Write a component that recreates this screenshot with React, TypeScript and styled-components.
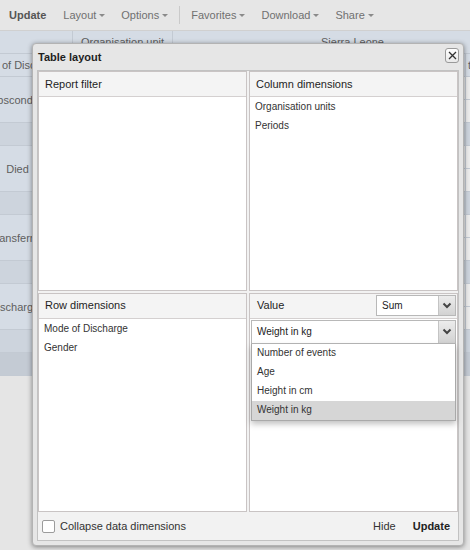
import React from 'react';
import styled, { createGlobalStyle } from 'styled-components';

const GlobalStyle = createGlobalStyle`
  * { box-sizing: border-box; }
  html, body {
    margin: 0;
    padding: 0;
    background: #e5e5e5;
    font-family: 'Liberation Sans', Arial, sans-serif;
  }
`;

const Page = styled.div`
  position: relative;
  width: 470px;
  height: 550px;
  overflow: hidden;
  background: #e5e5e5;
`;

/* ---------- toolbar ---------- */

const Toolbar = styled.div`
  display: flex;
  align-items: center;
  height: 31px;
  padding-left: 1px;
  background: #e6e6e6;
  border-bottom: 1px solid #d0d0d0;
`;

const ToolButton = styled.div<{ $bold?: boolean }>`
  display: flex;
  align-items: center;
  height: 100%;
  padding: 0 8px;
  margin-right: ${(p) => (p.$bold ? '1px' : '0')};
  font-size: 11px;
  font-weight: ${(p) => (p.$bold ? 'bold' : 'normal')};
  color: ${(p) => (p.$bold ? '#555' : '#707070')};
`;

const Caret = styled.span`
  width: 0;
  height: 0;
  margin-left: 3px;
  border-left: 3px solid transparent;
  border-right: 3px solid transparent;
  border-top: 3px solid #8a8a8a;
`;

const ToolSeparator = styled.div`
  width: 1px;
  height: 18px;
  margin: 0 3px;
  background: #cacaca;
`;

/* ---------- background pivot table ---------- */

const DataTable = styled.div`
  display: grid;
  grid-template-columns: 110px 100px 293px 67px;
  grid-auto-rows: 23px;
  margin-left: -37px;
  width: 570px;
`;

type Tone = 'head' | 'sub' | 'total' | 'data';

const toneColor: Record<Tone, string> = {
  head: '#d5dce5',
  sub: '#cdd4dd',
  total: '#c4cbd4',
  data: '#ececec',
};

const Cell = styled.div<{ $tone: Tone; $col?: string; $row?: string }>`
  display: flex;
  align-items: center;
  justify-content: center;
  grid-column: ${(p) => p.$col || 'auto'};
  grid-row: ${(p) => p.$row || 'auto'};
  background: ${(p) => toneColor[p.$tone]};
  border-right: 1px solid #c3cad3;
  border-bottom: 1px solid #c3cad3;
  font-size: 11px;
  color: #5e5e5e;
  white-space: nowrap;
  overflow: hidden;
`;

const EdgeCell = styled(Cell)`
  justify-content: flex-start;
  padding-left: 2px;
`;

const groups = ['Absconded', 'Died', 'Transferred', 'Discharged'];

const PivotTable: React.FC = () => {
  const rows: React.ReactNode[] = [];
  groups.forEach((g, i) => {
    const start = 3 + i * 3;
    rows.push(
      <Cell key={g} $tone="head" $col="1" $row={`${start} / span 2`}>
        {g}
      </Cell>,
      <Cell key={g + 'f'} $tone="head" $col="2" $row={`${start}`}>Female</Cell>,
      <Cell key={g + 'fa'} $tone="data" $col="3" $row={`${start}`} />,
      <Cell key={g + 'fb'} $tone="data" $col="4" $row={`${start}`} />,
      <Cell key={g + 'm'} $tone="head" $col="2" $row={`${start + 1}`}>Male</Cell>,
      <Cell key={g + 'ma'} $tone="data" $col="3" $row={`${start + 1}`} />,
      <Cell key={g + 'mb'} $tone="data" $col="4" $row={`${start + 1}`} />,
      <Cell key={g + 's'} $tone="sub" $col="1 / span 2" $row={`${start + 2}`} />,
      <Cell key={g + 'sa'} $tone="sub" $col="3" $row={`${start + 2}`} />,
      <Cell key={g + 'sb'} $tone="sub" $col="4" $row={`${start + 2}`} />
    );
  });

  return (
    <DataTable>
      <Cell $tone="head" $col="1" $row="1" />
      <Cell $tone="head" $col="2" $row="1">Organisation unit</Cell>
      <Cell $tone="head" $col="3 / span 2" $row="1">Sierra Leone</Cell>
      <Cell $tone="head" $col="1" $row="2">Mode of Discharge</Cell>
      <Cell $tone="head" $col="2" $row="2">Gender</Cell>
      <Cell $tone="head" $col="3" $row="2">Weight in kg</Cell>
      <EdgeCell $tone="head" $col="4" $row="2">te</EdgeCell>
      {rows}
      <Cell $tone="total" $col="1 / span 2" $row="15" />
      <Cell $tone="total" $col="3" $row="15" />
      <Cell $tone="total" $col="4" $row="15" />
    </DataTable>
  );
};

/* ---------- dialog ---------- */

const Dialog = styled.div`
  position: absolute;
  left: 32px;
  top: 43px;
  width: 432px;
  height: 503px;
  display: flex;
  flex-direction: column;
  padding: 0 4px 4px 4px;
  background: #e6e6e6;
  border: 1px solid #b3b3b3;
  border-radius: 4px;
  box-shadow: 0 1px 5px rgba(0, 0, 0, 0.45);
`;

const TitleBar = styled.div`
  display: flex;
  align-items: center;
  justify-content: space-between;
  height: 26px;
  padding-left: 1px;
`;

const Title = styled.div`
  font-size: 11px;
  font-weight: bold;
  color: #1e1e1e;
`;

const CloseButton = styled.div`
  display: flex;
  align-items: center;
  justify-content: center;
  width: 14px;
  height: 15px;
  margin-top: -3px;
  border: 1px solid #9a9a9a;
  border-radius: 3px;
  background: linear-gradient(#ffffff, #e9e9e9);
`;

const Body = styled.div`
  flex: 1;
  display: flex;
  flex-direction: column;
  background: #f2f2f2;
  border: 1px solid #c2c2c2;
`;

const PanelGrid = styled.div`
  flex: 1;
  display: grid;
  grid-template-columns: 1fr 1fr;
  grid-template-rows: 1fr 1fr;
  gap: 2px;
`;

const Panel = styled.div`
  display: flex;
  flex-direction: column;
  min-height: 0;
  background: #ffffff;
  border: 1px solid #c9c4c4;
`;

const PanelHeader = styled.div<{ $split?: boolean }>`
  display: flex;
  align-items: center;
  justify-content: ${(p) => (p.$split ? 'space-between' : 'flex-start')};
  height: 25px;
  flex-shrink: 0;
  padding: ${(p) => (p.$split ? '0 1px 1px 7px' : '0 6px 1px 6px')};
  background: #f4f4f4;
  border-bottom: 1px solid #d4d0d0;
  font-size: 11px;
  color: #1e1e1e;
`;

const ItemList = styled.div<{ $indent?: number }>`
  display: flex;
  flex-direction: column;
  padding-left: ${(p) => p.$indent ?? 5}px;
`;

const Item = styled.div`
  height: 19px;
  line-height: 19px;
  font-size: 10px;
  color: #333;
`;

const Select = styled.div<{ $width?: number; $height: number }>`
  display: flex;
  width: ${(p) => (p.$width ? `${p.$width}px` : 'auto')};
  height: ${(p) => p.$height}px;
  background: #ffffff;
  border: 1px solid #b8b8b8;
`;

const SelectText = styled.div`
  flex: 1;
  display: flex;
  align-items: center;
  padding-left: 5px;
  font-size: 10px;
  color: #222;
`;

const Trigger = styled.div`
  display: flex;
  align-items: center;
  justify-content: center;
  width: 17px;
  background: linear-gradient(#ececec, #d2d2d2);
  border-left: 1px solid #c4c4c4;
`;

const ComboWrap = styled.div`
  position: relative;
  margin: 1px 1px 0 1px;
`;

const DropList = styled.div`
  position: absolute;
  left: 0;
  right: 0;
  top: 100%;
  background: #ffffff;
  border: 1px solid #a9a9a9;
  border-top: none;
  box-shadow: 0 3px 6px rgba(0, 0, 0, 0.25);
  z-index: 2;
`;

const DropItem = styled.div<{ $selected?: boolean }>`
  height: 19px;
  line-height: 18px;
  padding-left: 5px;
  font-size: 10px;
  color: #333;
  background: ${(p) => (p.$selected ? '#d6d6d6' : 'transparent')};
`;

const Footer = styled.div`
  display: flex;
  align-items: center;
  height: 28px;
  flex-shrink: 0;
  padding: 0 8px 0 4px;
  font-size: 11px;
  color: #333;
`;

const CheckBox = styled.div`
  width: 13px;
  height: 13px;
  background: #ffffff;
  border: 1px solid #9c9c9c;
  border-radius: 2px;
`;

const CheckLabel = styled.span`
  margin-left: 5px;
  flex: 1;
`;

const FooterButton = styled.span<{ $bold?: boolean }>`
  margin-left: ${(p) => (p.$bold ? '17px' : '0')};
  font-weight: ${(p) => (p.$bold ? 'bold' : 'normal')};
  color: ${(p) => (p.$bold ? '#222' : '#333')};
`;

const Chevron: React.FC = () => (
  <svg width="10" height="7" viewBox="0 0 10 7">
    <polyline points="1.5,1.5 5,5 8.5,1.5" fill="none" stroke="#444" strokeWidth="2" />
  </svg>
);

const CloseIcon: React.FC = () => (
  <svg width="9" height="9" viewBox="0 0 9 9">
    <path d="M1 1 L8 8 M8 1 L1 8" stroke="#333" strokeWidth="1.3" />
  </svg>
);

const valueOptions = ['Number of events', 'Age', 'Height in cm', 'Weight in kg'];

const TableLayoutDialog: React.FC = () => (
  <Dialog>
    <TitleBar>
      <Title>Table layout</Title>
      <CloseButton>
        <CloseIcon />
      </CloseButton>
    </TitleBar>
    <Body>
      <PanelGrid>
        <Panel>
          <PanelHeader>Report filter</PanelHeader>
        </Panel>
        <Panel>
          <PanelHeader>Column dimensions</PanelHeader>
          <ItemList>
            <Item>Organisation units</Item>
            <Item>Periods</Item>
          </ItemList>
        </Panel>
        <Panel>
          <PanelHeader>Row dimensions</PanelHeader>
          <ItemList>
            <Item>Mode of Discharge</Item>
            <Item>Gender</Item>
          </ItemList>
        </Panel>
        <Panel>
          <PanelHeader $split>
            <span>Value</span>
            <Select $width={80} $height={21}>
              <SelectText>Sum</SelectText>
              <Trigger>
                <Chevron />
              </Trigger>
            </Select>
          </PanelHeader>
          <ComboWrap>
            <Select $height={24}>
              <SelectText>Weight in kg</SelectText>
              <Trigger>
                <Chevron />
              </Trigger>
            </Select>
            <DropList>
              {valueOptions.map((o) => (
                <DropItem key={o} $selected={o === 'Weight in kg'}>
                  {o}
                </DropItem>
              ))}
            </DropList>
          </ComboWrap>
        </Panel>
      </PanelGrid>
      <Footer>
        <CheckBox />
        <CheckLabel>Collapse data dimensions</CheckLabel>
        <FooterButton>Hide</FooterButton>
        <FooterButton $bold>Update</FooterButton>
      </Footer>
    </Body>
  </Dialog>
);

const App: React.FC = () => (
  <Page>
    <GlobalStyle />
    <Toolbar>
      <ToolButton $bold>Update</ToolButton>
      <ToolButton>
        Layout<Caret />
      </ToolButton>
      <ToolButton>
        Options<Caret />
      </ToolButton>
      <ToolSeparator />
      <ToolButton>
        Favorites<Caret />
      </ToolButton>
      <ToolButton>
        Download<Caret />
      </ToolButton>
      <ToolButton>
        Share<Caret />
      </ToolButton>
    </Toolbar>
    <PivotTable />
    <TableLayoutDialog />
  </Page>
);

export default App;
